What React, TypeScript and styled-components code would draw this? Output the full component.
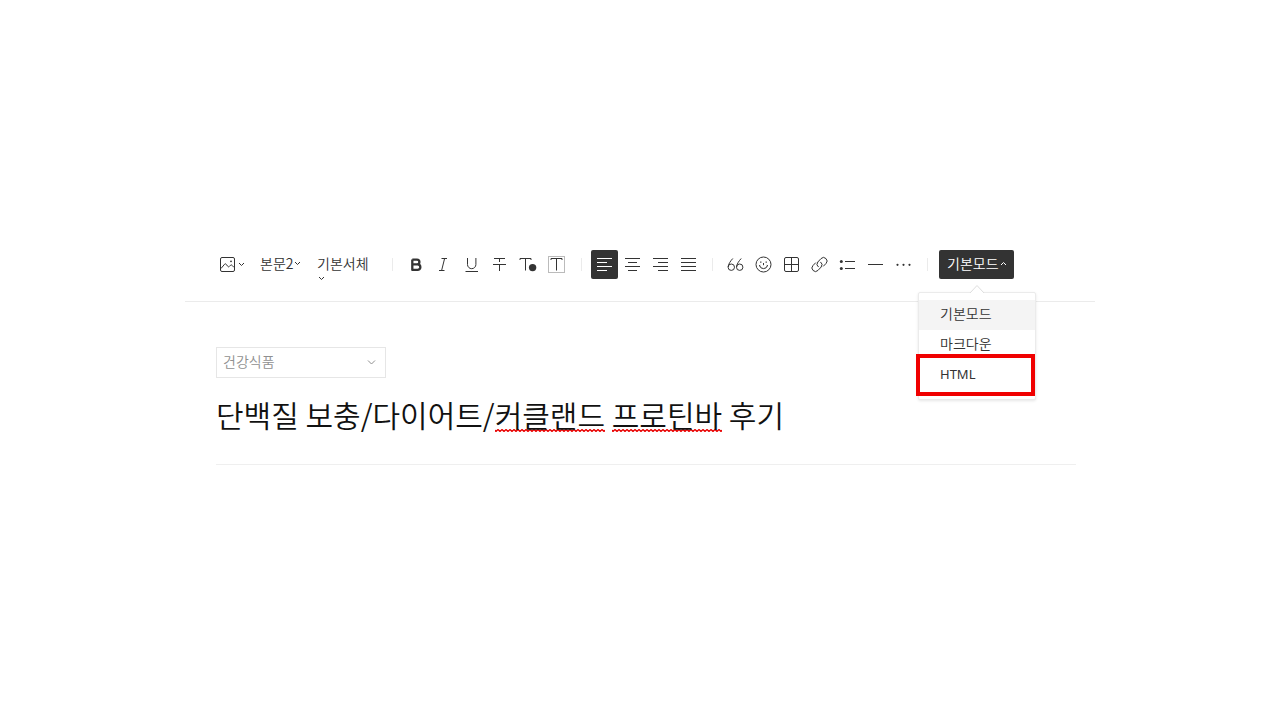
import React, { useState } from "react";
import styled, { createGlobalStyle } from "styled-components";

const GlobalStyle = createGlobalStyle`
  *, *::before, *::after { box-sizing: border-box; }
  body {
    margin: 0;
    background: #fff;
    color: #333;
    font-family: "Noto Sans CJK KR", "Noto Sans", sans-serif;
    font-size: 14px;
    font-weight: 350;
  }
  button, select { font: inherit; color: inherit; }
`;

const Editor = styled.main`
  max-width: 910px;
  margin: 0 auto;
  padding-top: 250px;
`;

const Toolbar = styled.div`
  display: flex;
  align-items: flex-start;
  height: 52px;
  padding-left: 34px;
  border-bottom: 1px solid #ebebeb;
`;

const Group = styled.div`
  display: flex;
  gap: 1px;
`;

const Separator = styled.span<{ $before?: number }>`
  width: 1px;
  height: 13px;
  margin: 8px 9px 0 ${({ $before = 10 }) => $before}px;
  background: #ebebeb;
`;

const DropButton = styled.button<{ $width: number }>`
  display: flex;
  flex-wrap: wrap;
  align-items: center;
  column-gap: 1px;
  width: ${({ $width }) => $width}px;
  padding: 0;
  border: 0;
  background: none;
  line-height: 26px;
  text-align: left;
`;

const ToolButton = styled.button<{ $active?: boolean }>`
  display: block;
  width: 27px;
  height: 29px;
  padding: 0;
  border: 0;
  border-radius: 2px;
  background: ${({ $active }) => ($active ? "#333" : "none")};
  color: ${({ $active }) => ($active ? "#fff" : "#333")};
`;

const Glyph = styled.svg`
  display: block;
  fill: none;
  stroke: currentColor;
`;

const FontChevron = styled.span`
  display: flex;
  width: 100%;
  height: 3px;
  padding-left: 1px;
`;

const Mode = styled.div`
  position: relative;
  margin-left: 2px;
`;

const ModeButton = styled.button`
  display: flex;
  align-items: center;
  gap: 1px;
  height: 29px;
  padding: 0 7px 3px 8px;
  border: 0;
  border-radius: 2px;
  background: #333;
  color: #fff;
  line-height: 26px;
`;

const Menu = styled.ul`
  position: absolute;
  top: 42px;
  left: -21px;
  width: 118px;
  margin: 0;
  padding: 7px 0 9px;
  border: 1px solid #ebebeb;
  border-radius: 2px;
  background: #fff;
  box-shadow: 0 1px 3px rgba(0, 0, 0, 0.1);
  list-style: none;
`;

const MenuArrow = styled(Glyph)`
  position: absolute;
  top: -9px;
  left: 50%;
  margin-left: -8px;
`;

const MenuItem = styled.button<{ $selected: boolean }>`
  display: block;
  width: 100%;
  height: 30px;
  padding: 0 21px 4px;
  border: 0;
  background: ${({ $selected }) => ($selected ? "#f4f4f4" : "#fff")};
  line-height: 26px;
  text-align: left;
`;

const LatinLabel = styled.span`
  font-family: "Noto Sans", sans-serif;
  font-size: 13px;
  font-weight: 400;
`;

const Highlight = styled.span`
  position: absolute;
  right: 0;
  bottom: 3px;
  width: 119px;
  height: 42px;
  border: 4px solid #f00000;
  pointer-events: none;
`;

const Content = styled.section`
  margin: 0 19px 0 31px;
  padding-top: 45px;
  border-bottom: 1px solid #efefef;
`;

const Category = styled.label`
  display: flex;
  position: relative;
  width: 170px;
`;

const CategorySelect = styled.select`
  width: 100%;
  height: 31px;
  padding: 0 24px 3px 6px;
  border: 1px solid #e6e6e6;
  border-radius: 0;
  background: #fff;
  color: #909090;
  appearance: none;
`;

const CategoryChevron = styled(Glyph)`
  position: absolute;
  top: 12px;
  right: 10px;
  color: #909090;
  pointer-events: none;
`;

const Title = styled.h1`
  margin: 14px 0 0;
  padding-bottom: 28px;
  color: #111;
  font-size: 30px;
  font-weight: 350;
  line-height: 44px;
`;

const Misspelled = styled.span`
  padding-bottom: 1px;
  background: url("data:image/svg+xml,%3Csvg xmlns='http://www.w3.org/2000/svg' width='4' height='3'%3E%3Cpath d='M-1 .5L1 2.5L3 .5L5 2.5' fill='none' stroke='%23e80000' stroke-width='1.3'/%3E%3C/svg%3E")
    repeat-x 0 calc(100% - 5px);
`;

const Chevron = ({ up = false }: { up?: boolean }) => (
  <Glyph width="7" height="5" viewBox="0 0 7 5" aria-hidden>
    <path d={up ? "M1 4L3.5 1.5L6 4" : "M1 1L3.5 3.5L6 1"} />
  </Glyph>
);

type Tool = { name: string; art: React.ReactNode };

const textTools: Tool[] = [
  {
    name: "굵게",
    art: <path strokeWidth="2.3" strokeLinejoin="round" d="M10.3 9.6V19.9H15.6A2.75 2.75 0 0 0 15.6 14.4H10.3H15A2.4 2.4 0 0 0 15 9.6H10.3" />,
  },
  { name: "기울임", art: <path d="M11.5 8.5H17M9 20.5H14.5M14.6 8.5L11.6 20.5" /> },
  { name: "밑줄", art: <path d="M9.5 8V14.5A4.2 4.2 0 0 0 17.9 14.5V8M7.5 21.5H20" /> },
  { name: "취소선", art: <path d="M8 8.5H19M7 14.5H20M13.5 8.5V12M13.5 14.5V21" /> },
  {
    name: "글자색",
    art: (
      <>
        <path d="M6 10V8.5H17V10M11.5 8.5V20.5" />
        <circle cx="18.6" cy="17.6" r="3.7" fill="currentColor" stroke="none" />
      </>
    ),
  },
  {
    name: "배경색",
    art: (
      <>
        <rect x="6.5" y="6.5" width="16" height="16" stroke="#bbb" />
        <path d="M9 10V8.5H20V10M14.5 8.5V20.5" />
      </>
    ),
  },
];

const alignTools: Tool[] = [
  { name: "왼쪽 정렬", art: <path d="M6 8.5H21M6 12.5H16M6 16.5H21M6 20.5H16" /> },
  { name: "가운데 정렬", art: <path d="M6 8.5H21M9 12.5H18M6 16.5H21M9 20.5H18" /> },
  { name: "오른쪽 정렬", art: <path d="M6 8.5H21M11 12.5H21M6 16.5H21M11 20.5H21" /> },
  { name: "양쪽 정렬", art: <path d="M6 8.5H21M6 12.5H21M6 16.5H21M6 20.5H21" /> },
];

const insertTools: Tool[] = [
  {
    name: "인용구",
    art: (
      <>
        <circle cx="9.3" cy="17.2" r="3.2" />
        <circle cx="17.7" cy="17.2" r="3.2" />
        <path d="M10.8 8.5C8.5 11 6.4 14 6.1 17M19.2 8.5C16.9 11 14.8 14 14.5 17" />
      </>
    ),
  },
  {
    name: "이모티콘",
    art: (
      <>
        <circle cx="13.5" cy="14.5" r="7.5" />
        <path d="M9.6 15.5A4 4 0 0 0 17.4 15.5M9 16L10.2 15.3M18 16L16.8 15.3M13.5 13V15.2" />
        <path d="M10.2 12.2H11.4M15.6 12.2H16.8" strokeWidth="1.3" />
      </>
    ),
  },
  {
    name: "표",
    art: (
      <>
        <rect x="6.5" y="7.5" width="14" height="14" rx="1.5" />
        <path d="M13.5 7.5V21.5M6.5 14.5H20.5" />
      </>
    ),
  },
  {
    name: "링크",
    art: (
      <>
        <path d="M12.6 17.1A3.6 3.6 0 0 1 11.8 12L15 8.6A3.5 3.5 0 0 1 20 13.5L17.2 16.4" />
        <path d="M14.4 11.9A3.6 3.6 0 0 1 15.2 17L12 20.4A3.5 3.5 0 0 1 7 15.5L9.8 12.6" />
      </>
    ),
  },
  {
    name: "목록",
    art: (
      <>
        <path d="M11 11.5H21M11 18.5H21" />
        <g fill="currentColor" stroke="none">
          <circle cx="7.3" cy="11.5" r="1.5" />
          <circle cx="7.3" cy="18.5" r="1.5" />
        </g>
      </>
    ),
  },
  { name: "구분선", art: <path d="M6 14.5H21" /> },
  {
    name: "더보기",
    art: (
      <g fill="currentColor" stroke="none">
        <circle cx="7.5" cy="14.8" r="1.1" />
        <circle cx="13.5" cy="14.8" r="1.1" />
        <circle cx="19.5" cy="14.8" r="1.1" />
      </g>
    ),
  },
];

const ToolGroup = ({ tools, active, onPick }: { tools: Tool[]; active?: string; onPick?: (name: string) => void }) => (
  <Group>
    {tools.map(({ name, art }) => (
      <ToolButton key={name} type="button" aria-label={name} $active={name === active} onClick={() => onPick?.(name)}>
        <Glyph width="27" height="29" viewBox="0 0 27 29" aria-hidden>
          {art}
        </Glyph>
      </ToolButton>
    ))}
  </Group>
);

const modes = ["기본모드", "마크다운", "HTML"];

export default function App() {
  const [align, setAlign] = useState("왼쪽 정렬");
  const [mode, setMode] = useState(modes[0]);

  return (
    <>
      <GlobalStyle />
      <Editor>
        <Toolbar role="toolbar" aria-label="편집 도구">
          <DropButton type="button" $width={41} aria-label="첨부">
            <Glyph width="18" height="29" viewBox="0 0 18 29" aria-hidden>
              <rect x="1.5" y="7.5" width="14" height="14" rx="1.5" />
              <path d="M2 18.5L5.6 14.2C6.2 13.6 6.7 13.7 7.2 14.3L8.8 16.4C9.4 17 9.9 17 10.4 16.4L11.6 15.2C12.2 14.7 12.6 14.8 13 15.3L15 17.4" />
              <circle cx="12" cy="11.3" r="0.9" fill="currentColor" stroke="none" />
            </Glyph>
            <Chevron />
          </DropButton>
          <DropButton type="button" $width={57}>
            본문2
            <Chevron />
          </DropButton>
          <DropButton type="button" $width={63}>
            기본서체
            <FontChevron>
              <Chevron />
            </FontChevron>
          </DropButton>
          <Separator $before={12} />
          <ToolGroup tools={textTools} />
          <Separator $before={12} />
          <ToolGroup tools={alignTools} active={align} onPick={setAlign} />
          <Separator />
          <ToolGroup tools={insertTools} />
          <Separator />
          <Mode>
            <ModeButton type="button" aria-expanded="true">
              {mode}
              <Chevron up />
            </ModeButton>
            <Menu>
              <MenuArrow width="16" height="9" viewBox="0 0 16 9" aria-hidden>
                <path d="M1 9L8 1.5L15 9" fill="#fff" stroke="#ddd" />
              </MenuArrow>
              {modes.map((name) => (
                <li key={name}>
                  <MenuItem type="button" $selected={name === mode} onClick={() => setMode(name)}>
                    {name === "HTML" ? <LatinLabel>{name}</LatinLabel> : name}
                  </MenuItem>
                </li>
              ))}
              <Highlight />
            </Menu>
          </Mode>
        </Toolbar>
        <Content>
          <Category>
            <CategorySelect aria-label="카테고리" defaultValue="건강식품">
              <option>건강식품</option>
            </CategorySelect>
            <CategoryChevron width="9" height="7" viewBox="0 0 9 7" aria-hidden>
              <path d="M1 1.5L4.5 5L8 1.5" />
            </CategoryChevron>
          </Category>
          <Title>
            단백질 보충/다이어트/<Misspelled>커클랜드</Misspelled> <Misspelled>프로틴바</Misspelled> 후기
          </Title>
        </Content>
      </Editor>
    </>
  );
}
